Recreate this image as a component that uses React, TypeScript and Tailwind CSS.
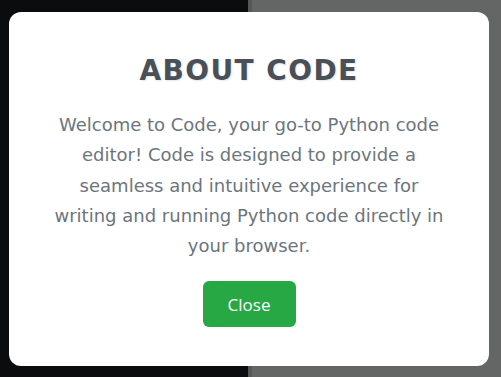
export default function App() {
  return (
    <div className="relative h-screen w-full overflow-hidden">
      {/* dimmed app behind the modal */}
      <div className="flex h-full w-full">
        <div className="w-[248px] bg-[#0b0c0d]" />
        <div className="w-[4px] bg-[#565757]" />
        <div className="flex-1 bg-[#646565]" />
      </div>

      <div className="absolute inset-0 flex items-center justify-center pr-[3px] pt-px">
        <div className="w-[480px] rounded-xl bg-white px-10 pt-[43px] pb-[39px] text-center">
          <h2 className="mb-[23px] font-['DejaVu_Sans',sans-serif] text-[28px] leading-[1.164] font-bold tracking-[0.05em] text-[#495057] [text-shadow:1px_1px_2px_rgba(0,0,0,0.1)]">
            ABOUT CODE
          </h2>
          <p className="mb-5 font-['DejaVu_Sans',sans-serif] text-[18px] leading-[1.68] text-[#6c757d]">
            Welcome to Code, your go-to Python code editor! Code is designed to provide a seamless and
            intuitive experience for writing and running Python code directly in your browser.
          </p>
          <button className="h-[46px] w-[93px] rounded-md bg-[#28a745] font-['Open_Sans',sans-serif] text-[17px] text-white">
            Close
          </button>
        </div>
      </div>
    </div>
  )
}
